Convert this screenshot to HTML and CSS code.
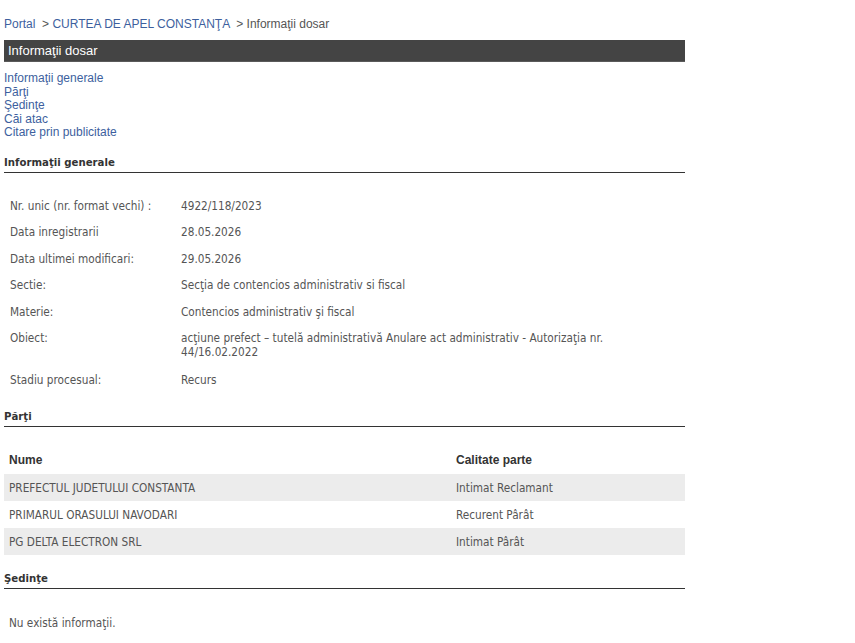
FILE: index.html
```html
<!doctype html>
<html lang="ro">
  <head>
    <meta charset="UTF-8" />
    <meta name="viewport" content="width=device-width, initial-scale=1.0" />
    <title>Informaţii dosar</title>
    <link rel="stylesheet" href="styles.css">
  </head>
  <body>
    <div class="page">
      <div class="breadcrumb">
        <a href="#">Portal</a> &nbsp;&gt; <a href="#">CURTEA DE APEL CONSTANŢA</a> &nbsp;&gt; <span>Informaţii dosar</span>
      </div>

      <div class="title-bar">Informaţii dosar</div>

      <ul class="toc">
        <li><a href="#generale">Informaţii generale</a></li>
        <li><a href="#parti">Părţi</a></li>
        <li><a href="#sedinte">Şedinţe</a></li>
        <li><a href="#cai">Căi atac</a></li>
        <li><a href="#citare">Citare prin publicitate</a></li>
      </ul>

      <h2 class="section-title" id="generale">Informaţii generale</h2>
      <table class="info">
        <tr><td class="label">Nr. unic (nr. format vechi) :</td><td>4922/118/2023</td></tr>
        <tr><td class="label">Data inregistrarii</td><td>28.05.2026</td></tr>
        <tr><td class="label">Data ultimei modificari:</td><td>29.05.2026</td></tr>
        <tr><td class="label">Sectie:</td><td>Secţia de contencios administrativ si fiscal</td></tr>
        <tr><td class="label">Materie:</td><td>Contencios administrativ şi fiscal</td></tr>
        <tr><td class="label">Obiect:</td><td class="wrap">acţiune prefect – tutelă administrativă Anulare act administrativ - Autorizaţia nr. 44/16.02.2022</td></tr>
        <tr><td class="label">Stadiu procesual:</td><td>Recurs</td></tr>
      </table>

      <h2 class="section-title" id="parti">Părţi</h2>
      <table class="parties">
        <thead>
          <tr><th>Nume</th><th class="col-role">Calitate parte</th></tr>
        </thead>
        <tbody>
          <tr><td>PREFECTUL JUDETULUI CONSTANTA</td><td>Intimat Reclamant</td></tr>
          <tr><td>PRIMARUL ORASULUI NAVODARI</td><td>Recurent Pârât</td></tr>
          <tr><td>PG DELTA ELECTRON SRL</td><td>Intimat Pârât</td></tr>
        </tbody>
      </table>

      <h2 class="section-title" id="sedinte">Şedinţe</h2>
      <p class="empty">Nu există informaţii.</p>
    </div>
  </body>
</html>
```

FILE: styles.css
```css
body {
  margin: 0;
  background: #fff;
  font-family: "Liberation Sans", Arial, sans-serif;
  font-size: 12px;
  color: #555;
}

.page {
  width: 681px;
  padding: 0 4px;
}

a {
  color: #3d5f9e;
  text-decoration: none;
}

.breadcrumb {
  padding-top: 17px;
  height: 23px;
  line-height: 14px;
  color: #555;
}

.title-bar {
  background-color: #444;
  color: #fff;
  font-size: 13px;
  height: 22px;
  line-height: 21px;
  padding-left: 4px;
  border-bottom: 1px solid #5a5a5a;
  box-sizing: border-box;
}

.toc {
  list-style: none;
  margin: 0;
  padding: 10px 0 0;
}

.toc li {
  line-height: 13.5px;
}

.section-title {
  margin: 0;
  font-family: "DejaVu Sans Condensed", "DejaVu Sans", sans-serif;
  font-stretch: condensed;
  font-size: 11.3px;
  font-weight: bold;
  color: #333;
  border-bottom: 1px solid #333;
  padding: 0 0 2px 0;
  line-height: 14px;
}

#generale {
  margin-top: 16px;
}

.info,
.parties,
.empty {
  font-family: "DejaVu Sans Condensed", "DejaVu Sans", sans-serif;
  font-stretch: condensed;
  font-size: 11.7px;
  color: #555;
}

.info,
.parties {
  border-collapse: collapse;
}

.info {
  margin: 20px 0 16px;
}

.info td {
  padding: 6px 6px 6.6px;
  vertical-align: top;
  line-height: 14px;
}

.info td.label {
  width: 159px;
}

.info td.wrap {
  width: 440px;
  padding-bottom: 8px;
}

.parties {
  width: 100%;
  margin-top: 26px;
}

.parties th {
  text-align: left;
  font-family: "Liberation Sans", Arial, sans-serif;
  font-size: 12px;
  color: #333;
  font-weight: bold;
  padding: 0 5px;
  height: 21px;
  line-height: 14px;
  vertical-align: top;
}

.parties .col-role {
  width: 224px;
}

.parties td {
  padding: 0 5px;
  height: 27px;
}

.parties tbody tr:nth-child(odd) {
  background-color: #ececec;
}

#sedinte {
  margin-top: 17px;
}

.empty {
  margin: 27px 0 0 5px;
}
```
